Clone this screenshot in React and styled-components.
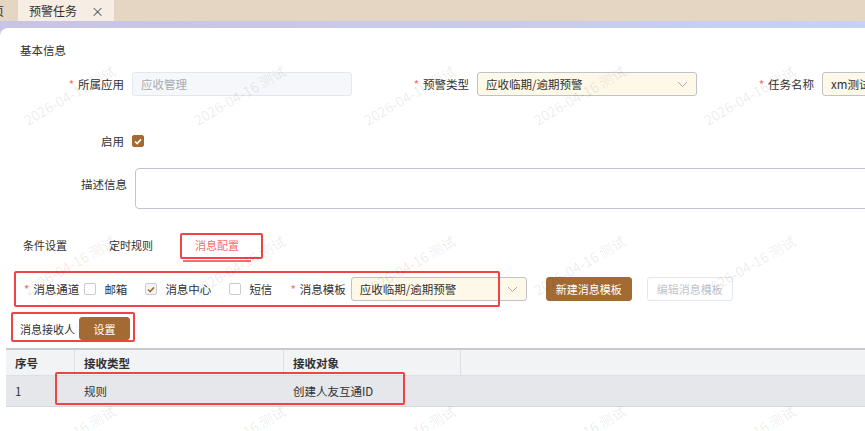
import React from 'react';
import styled, { createGlobalStyle } from 'styled-components';

const BROWN = '#a36b33';
const RED = '#f56c6c';

const GlobalStyle = createGlobalStyle`
  body {
    margin: 0;
    background: #fff;
    font-family: "Noto Sans CJK SC", "Noto Sans", sans-serif;
    color: #303133;
  }
`;

function Chevron() {
  return (
    <svg width="11" height="7" viewBox="0 0 11 7">
      <polyline points="1,1 5.5,5.5 10,1" fill="none" stroke="#a8abb2" strokeWidth="1" />
    </svg>
  );
}

function Tick({ color }) {
  return (
    <svg width="8" height="7" viewBox="0 0 8 7">
      <polyline points="1,3.5 3.2,5.6 7,1.4" fill="none" stroke={color} strokeWidth="1.6" />
    </svg>
  );
}

const marks = Array.from({ length: 18 });

export default function App() {
  return (
    <Page>
      <GlobalStyle />
      <TabBar>
        <PageTab $cut>首页</PageTab>
        <PageTab $active>
          预警任务
          <Close>×</Close>
        </PageTab>
      </TabBar>
      <Strip>
        <Panel>
          <SectionTitle>基本信息</SectionTitle>

          <FormRow $top={14}>
            <FormItem>
              <Label>
                <Star>*</Star>所属应用
              </Label>
              <Field $variant="disabled">应收管理</Field>
            </FormItem>
            <FormItem>
              <Label>
                <Star>*</Star>预警类型
              </Label>
              <Field $variant="cream">
                应收临期/逾期预警
                <Chevron />
              </Field>
            </FormItem>
            <FormItem>
              <Label>
                <Star>*</Star>任务名称
              </Label>
              <Field $variant="cream">xm测试预警任务</Field>
            </FormItem>
          </FormRow>

          <FormRow $top={33}>
            <FormItem>
              <Label>启用</Label>
              <CheckBox $filled>
                <Tick color="#fff" />
              </CheckBox>
            </FormItem>
          </FormRow>

          <FormRow $top={15} $align="flex-start">
            <Label $width={128} $pad={8}>
              描述信息
            </Label>
            <TextArea />
          </FormRow>

          <TabsRow>
            <Tab>条件设置</Tab>
            <Tab>定时规则</Tab>
            <Tab $active>
              消息配置
              <Annotation $l={-3} $t={2} $w={83} $h={26} />
            </Tab>
          </TabsRow>

          <ChannelRow>
            <Annotation $l={14} $t={-6} $w={486} $h={36} />
            <InlineLabel>
              <Star>*</Star>消息通道
            </InlineLabel>
            <CheckItem>
              <CheckBox />
              邮箱
            </CheckItem>
            <CheckItem>
              <CheckBox $muted>
                <Tick color={BROWN} />
              </CheckBox>
              消息中心
            </CheckItem>
            <CheckItem>
              <CheckBox />
              短信
            </CheckItem>
            <InlineLabel>
              <Star>*</Star>消息模板
            </InlineLabel>
            <Field $variant="cream" $width={176}>
              应收临期/逾期预警
              <Chevron />
            </Field>
            <Button $gap={19}>新建消息模板</Button>
            <Button $gap={15} $ghost>
              编辑消息模板
            </Button>
          </ChannelRow>

          <ReceiverRow>
            <Annotation $l={11} $t={-5} $w={124} $h={30} />
            <ReceiverLabel>消息接收人</ReceiverLabel>
            <Button $width={51} $height={23}>
              设置
            </Button>
          </ReceiverRow>

          <Table>
            <GridRow>
              <HeadCell>序号</HeadCell>
              <HeadCell>接收类型</HeadCell>
              <HeadCell>接收对象</HeadCell>
              <HeadCell />
            </GridRow>
            <GridRow>
              <Annotation $l={49} $t={-4} $w={350} $h={33} />
              <BodyCell>1</BodyCell>
              <BodyCell>规则</BodyCell>
              <BodyCell>创建人友互通ID</BodyCell>
              <BodyCell />
            </GridRow>
          </Table>
        </Panel>
      </Strip>

      <Watermarks>
        {marks.map((_, i) => (
          <MarkCell key={i}>
            <Mark>2026-04-16 测试</Mark>
          </MarkCell>
        ))}
      </Watermarks>
    </Page>
  );
}

const Page = styled.div`
  position: relative;
  width: 865px;
  height: 431px;
  overflow: hidden;
`;

const TabBar = styled.div`
  display: flex;
  height: 21px;
  background: #e5d5c3;
`;

const PageTab = styled.div`
  display: flex;
  align-items: center;
  font-size: 12px;
  line-height: 21px;
  white-space: nowrap;
  color: #303133;
  margin-left: ${(p) => (p.$cut ? '-20px' : '0')};
  padding: ${(p) => (p.$cut ? '0 14px 0 0' : '0 10px 0 11px')};
  background: ${(p) => (p.$active ? '#f6eee5' : 'transparent')};
`;

const Close = styled.span`
  margin-left: 14px;
  font-size: 13px;
  color: #555;
`;

const Strip = styled.div`
  padding-top: 7px;
  background: linear-gradient(90deg, #c8c4e5, #c9cbea 60%, #c4d3f2);
`;

const Panel = styled.div`
  height: 403px;
  background: #fff;
  border-top-left-radius: 8px;
  overflow: hidden;
`;

const SectionTitle = styled.div`
  margin-top: 14px;
  padding-left: 20px;
  font-size: 11.5px;
  line-height: 16px;
  color: #303133;
`;

const FormRow = styled.div`
  display: flex;
  align-items: ${(p) => p.$align || 'center'};
  margin-top: ${(p) => p.$top}px;
  padding-left: 7px;
  min-height: 24px;
`;

const FormItem = styled.div`
  display: flex;
  align-items: center;
  flex: 0 0 345px;
  height: 24px;
`;

const Label = styled.div`
  flex: 0 0 ${(p) => p.$width || 125}px;
  box-sizing: border-box;
  padding-right: 8px;
  padding-top: ${(p) => p.$pad || 0}px;
  text-align: right;
  font-size: 11.5px;
  line-height: 16px;
  color: #303133;
  white-space: nowrap;
`;

const Star = styled.span`
  color: ${RED};
  margin-right: 4px;
`;

const fieldColors = {
  disabled: { bg: '#f5f7fa', border: '#e4e7ed', color: '#a8abb2' },
  cream: { bg: '#fdf8e7', border: '#bfc2c9', color: '#303133' },
};

const Field = styled.div`
  flex: 0 0 ${(p) => p.$width || 220}px;
  height: 24px;
  box-sizing: border-box;
  display: flex;
  align-items: center;
  justify-content: space-between;
  padding: 0 8px;
  border-radius: 3px;
  font-size: 11.5px;
  white-space: nowrap;
  overflow: hidden;
  background: ${(p) => fieldColors[p.$variant].bg};
  border: 1px solid ${(p) => fieldColors[p.$variant].border};
  color: ${(p) => fieldColors[p.$variant].color};
`;

const CheckBox = styled.span`
  flex: 0 0 12px;
  width: 12px;
  height: 12px;
  box-sizing: border-box;
  display: inline-flex;
  align-items: center;
  justify-content: center;
  border-radius: 2px;
  background: ${(p) => (p.$filled ? BROWN : p.$muted ? '#f4f4f5' : '#fff')};
  border: 1px solid ${(p) => (p.$filled ? BROWN : '#c8cbd1')};
`;

const TextArea = styled.div`
  flex: 0 0 800px;
  height: 41px;
  box-sizing: border-box;
  border: 1px solid #c0c4cc;
  border-radius: 4px;
`;

const TabsRow = styled.div`
  display: flex;
  gap: 18px;
  margin-top: 22px;
  padding-left: 11px;
`;

const Tab = styled.div`
  position: relative;
  width: 68px;
  height: 31px;
  box-sizing: border-box;
  padding-top: 6px;
  text-align: center;
  font-size: 11px;
  line-height: 16px;
  color: ${(p) => (p.$active ? RED : '#303133')};
  border-bottom: 2px solid ${(p) => (p.$active ? RED : 'transparent')};
`;

const Annotation = styled.span`
  position: absolute;
  left: ${(p) => p.$l}px;
  top: ${(p) => p.$t}px;
  width: ${(p) => p.$w}px;
  height: ${(p) => p.$h}px;
  box-sizing: border-box;
  border: 2px solid #ee4444;
  border-radius: 2px;
  pointer-events: none;
  z-index: 2;
`;

const ChannelRow = styled.div`
  position: relative;
  display: flex;
  align-items: center;
  height: 24px;
  margin-top: 15px;
  padding-left: 24px;
  font-size: 11.5px;
  white-space: nowrap;
`;

const InlineLabel = styled.span`
  margin-right: 5px;
  color: #303133;
`;

const CheckItem = styled.span`
  display: inline-flex;
  align-items: center;
  gap: 8px;
  margin-right: 18px;
  color: #303133;
`;

const Button = styled.button`
  flex: 0 0 auto;
  width: ${(p) => (p.$width ? `${p.$width}px` : 'auto')};
  height: ${(p) => p.$height || 24}px;
  margin-left: ${(p) => p.$gap || 0}px;
  padding: 0 9px;
  box-sizing: border-box;
  border-radius: 3px;
  font-family: inherit;
  font-size: 11px;
  white-space: nowrap;
  background: ${(p) => (p.$ghost ? '#fff' : BROWN)};
  color: ${(p) => (p.$ghost ? '#c0c4cc' : '#fff')};
  border: 1px solid ${(p) => (p.$ghost ? '#e4e7ed' : BROWN)};
`;

const ReceiverRow = styled.div`
  position: relative;
  display: flex;
  align-items: center;
  height: 23px;
  margin-top: 16px;
  padding-left: 20px;
`;

const ReceiverLabel = styled.span`
  margin-right: 4px;
  font-size: 11px;
  color: #303133;
`;

const Table = styled.div`
  margin: 8px 0 0 6px;
  width: 900px;
  border-top: 2px solid #c9cacd;
  font-size: 11.5px;
`;

const GridRow = styled.div`
  position: relative;
  display: grid;
  grid-template-columns: 69px 209px 177px 1fr;
`;

const HeadCell = styled.div`
  height: 26px;
  box-sizing: border-box;
  display: flex;
  align-items: center;
  padding-left: 9px;
  background: #f2f3f5;
  border-right: 1px solid #dcdfe6;
  border-bottom: 1px solid #dcdfe6;
  font-weight: 700;
  color: #303133;
`;

const BodyCell = styled.div`
  height: 31px;
  box-sizing: border-box;
  display: flex;
  align-items: center;
  padding-left: 9px;
  background: #e6e7eb;
  border-bottom: 1px solid #d6d8dd;
  color: #303133;
`;

const Watermarks = styled.div`
  position: absolute;
  left: -15px;
  top: 10px;
  display: grid;
  grid-template-columns: repeat(6, 170px);
  grid-auto-rows: 170px;
  pointer-events: none;
  z-index: 3;
`;

const MarkCell = styled.div`
  display: flex;
  align-items: center;
  justify-content: center;
`;

const Mark = styled.span`
  transform: rotate(-30deg);
  font-size: 14px;
  white-space: nowrap;
  color: rgba(0, 0, 0, 0.09);
`;
